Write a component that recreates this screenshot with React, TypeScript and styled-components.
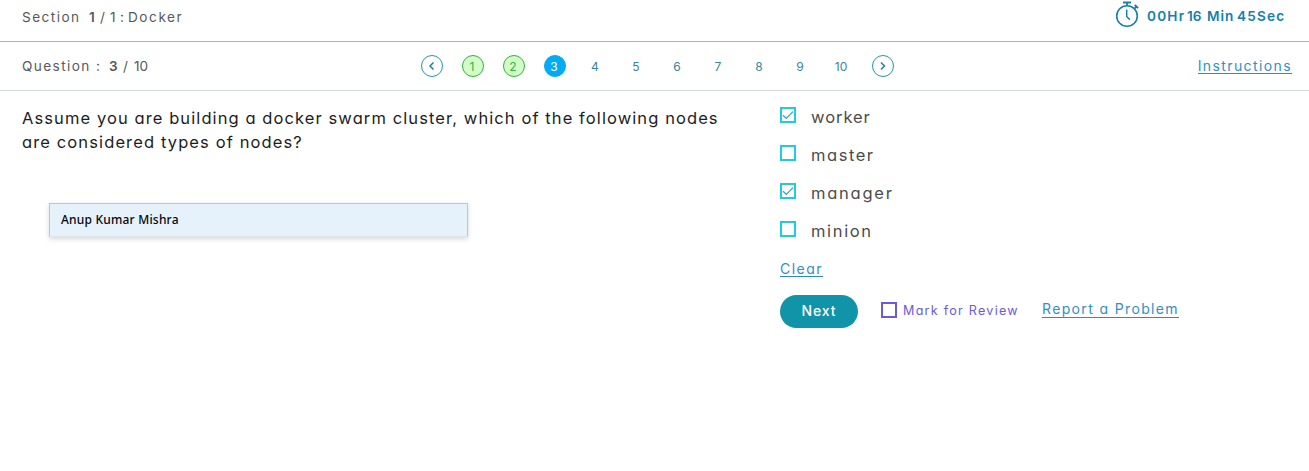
import React from "react";
import styled, { createGlobalStyle } from "styled-components";

const GlobalStyle = createGlobalStyle`
  * { box-sizing: border-box; }
  body {
    margin: 0;
    background: #fff;
    font-family: Inter, "Liberation Sans", sans-serif;
    font-feature-settings: "cv11" 1, "calt" 0;
    overflow: hidden;
  }
`;

const Page = styled.div`
  height: 471px;
  background: #fff;
  color: #58595b;
`;

const SectionBar = styled.header`
  display: flex;
  justify-content: space-between;
  height: 42px;
  padding: 0 24px 0 22px;
  border-bottom: 1px solid #74cbd8;
`;

const QuestionBar = styled.nav`
  display: grid;
  grid-template-columns: 399px 1fr auto;
  height: 49px;
  padding: 0 17px 0 22px;
  border-bottom: 1px solid #d9dcdc;
  line-height: 48px;
`;

const Label = styled.div<{ $line: number }>`
  display: flex;
  font-size: 13.6px;
  line-height: ${(p) => p.$line}px;
  white-space: pre;
`;

const Piece = styled.span<{ $w: number; $ls?: number; $bold?: boolean }>`
  width: ${(p) => p.$w}px;
  letter-spacing: ${(p) => p.$ls ?? 0}px;
  font-weight: ${(p) => (p.$bold ? 600 : 400)};
`;

const Timer = styled.div`
  display: flex;
  color: #1480ad;
  font-size: 13.6px;
  line-height: 33px;
  white-space: pre;
`;

const StopwatchIcon = styled.svg`
  width: 26px;
  height: 28px;
  margin-right: 6px;
`;

const Pager = styled.div`
  display: flex;
  gap: 19px;
  padding-top: 13px;
`;

type BubbleKind = "plain" | "done" | "current" | "arrow";

const bubbleColors: Record<BubbleKind, [string, string, string]> = {
  plain: ["transparent", "transparent", "#3b83a0"],
  done: ["#d3fdc8", "#2eb53a", "#2eb53a"],
  current: ["#03aaf4", "#03aaf4", "#ffffff"],
  arrow: ["#ffffff", "#2399a8", "#26808f"],
};

const Bubble = styled.span<{ $kind: BubbleKind }>`
  display: flex;
  align-items: center;
  justify-content: center;
  width: 22px;
  height: 22px;
  border-radius: 50%;
  border: 1px solid ${(p) => bubbleColors[p.$kind][1]};
  background: ${(p) => bubbleColors[p.$kind][0]};
  color: ${(p) => bubbleColors[p.$kind][2]};
  font-size: 12px;
  line-height: 20px;
  padding: 1px 2px 0 0;
`;

const ArrowIcon = styled.svg`
  width: 10px;
  height: 10px;
  margin-top: -1px;
`;

const TextLink = styled.a<{ $ls: number; $line?: number }>`
  align-self: flex-start;
  display: inline-block;
  height: 17px;
  line-height: ${(p) => p.$line ?? 17}px;
  border-bottom: 1px solid #2b8cc4;
  color: #2f8fc8;
  font-size: 14px;
  letter-spacing: ${(p) => p.$ls}px;
  white-space: nowrap;
`;

const InstructionsLink = styled(TextLink)`
  margin-top: 15px;
`;

const Body = styled.main`
  display: grid;
  grid-template-columns: 780px 1fr;
`;

const QuestionPane = styled.section`
  padding: 15px 0 0 22px;
`;

const QuestionText = styled.p`
  margin: 0;
  color: #1d1d1d;
  font-size: 16.5px;
  line-height: 24px;
  white-space: nowrap;
`;

const QuestionLine = styled.span<{ $ls: number }>`
  display: block;
  letter-spacing: ${(p) => p.$ls}px;
`;

const NameCard = styled.div`
  width: 419px;
  height: 34px;
  margin: 49px 0 0 27px;
  padding-left: 11px;
  border: 1px solid #bfc6cd;
  border-bottom-color: #dfe6ec;
  background: #e5f1fb;
  box-shadow: 0 2px 5px rgba(0, 0, 0, 0.16);
  color: #05070a;
  font-family: "Noto Sans", "Open Sans", sans-serif;
  font-size: 12px;
  font-weight: 500;
  line-height: 31px;
  letter-spacing: 0.2px;
`;

const AnswerPane = styled.section`
  padding-top: 16px;
`;

const Option = styled.label`
  display: flex;
  height: 38px;
`;

const Box = styled.span<{ $color: string }>`
  display: block;
  width: 16px;
  height: 16px;
  margin-right: 15px;
  border: 2px solid ${(p) => p.$color};
`;

const CheckIcon = styled.svg`
  display: block;
  width: 12px;
  height: 12px;
`;

const OptionText = styled.span<{ $ls: number }>`
  color: #4c4c4c;
  font-size: 16.5px;
  line-height: 21px;
  letter-spacing: ${(p) => p.$ls}px;
`;

const ClearRow = styled.div`
  display: flex;
  height: 36px;
  padding-top: 1px;
`;

const Actions = styled.div`
  display: flex;
  height: 33px;
`;

const NextButton = styled.button`
  width: 78px;
  height: 33px;
  margin: 0 23px 0 0;
  padding: 0 0 2px;
  border: 0;
  border-radius: 17px;
  background: #1193a8;
  color: #fff;
  font: 500 14px/31px Inter, sans-serif;
  letter-spacing: 0.9px;
`;

const Review = styled.label`
  display: flex;
  width: 138px;
  margin: 7px 23px 0 0;
  color: #6b5ae0;
  font-size: 12.6px;
  line-height: 17px;
  letter-spacing: 1.25px;
  white-space: nowrap;
`;

const ReviewBox = styled(Box)`
  flex: none;
  margin-right: 6px;
`;

const ReportLink = styled(TextLink)`
  margin-top: 6px;
`;

const options = [
  { text: "worker", checked: true, ls: 0.95 },
  { text: "master", checked: false, ls: 1.55 },
  { text: "manager", checked: true, ls: 1.75 },
  { text: "minion", checked: false, ls: 1.65 },
];

const bubbleKind = (n: number): BubbleKind => (n < 3 ? "done" : n === 3 ? "current" : "plain");

function Arrow({ d }: { d: string }) {
  return (
    <Bubble $kind="arrow">
      <ArrowIcon viewBox="0 0 10 10" fill="none" stroke="currentColor" strokeWidth="1.5">
        <path d={d} />
      </ArrowIcon>
    </Bubble>
  );
}

export default function App() {
  return (
    <Page>
      <GlobalStyle />
      <SectionBar>
        <Label $line={34}>
          <Piece $w={67} $ls={1.45}>Section</Piece>
          <Piece $w={11} $bold>1</Piece>
          <Piece $w={10}>/</Piece>
          <Piece $w={10}>1</Piece>
          <Piece $w={8}>:</Piece>
          <Piece $w={60} $ls={1.55}>Docker</Piece>
        </Label>
        <Timer>
          <StopwatchIcon viewBox="0 0 26 28" fill="none" stroke="currentColor">
            <circle cx="12" cy="16" r="10.3" strokeWidth="1.6" />
            <path d="M8 2.5h8M12 3v3" strokeWidth="1.8" />
            <path d="M19.2 8.8l2.2-2.2M19.7 4.8l3.4 3.4" strokeWidth="1.9" />
            <path d="M11.7 9.5v7l3.2 3.2" strokeWidth="1.5" />
          </StopwatchIcon>
          <Piece $w={40} $ls={1.2} $bold>00Hr</Piece>
          <Piece $w={20} $bold>16</Piece>
          <Piece $w={30} $ls={0.9} $bold>Min</Piece>
          <Piece $w={48} $ls={1.2} $bold>45Sec</Piece>
        </Timer>
      </SectionBar>
      <QuestionBar>
        <Label $line={48}>
          <Piece $w={74} $ls={1.4}>Question</Piece>
          <Piece $w={13}>:</Piece>
          <Piece $w={14} $bold>3</Piece>
          <Piece $w={11}>/</Piece>
          <Piece $w={20}>10</Piece>
        </Label>
        <Pager>
          <Arrow d="M7.5 1.5L4 5l3.5 3.5" />
          {Array.from({ length: 10 }, (_, i) => i + 1).map((n) => (
            <Bubble key={n} $kind={bubbleKind(n)}>{n}</Bubble>
          ))}
          <Arrow d="M4 1.5L7.5 5L4 8.5" />
        </Pager>
        <InstructionsLink $ls={1.4}>Instructions</InstructionsLink>
      </QuestionBar>
      <Body>
        <QuestionPane>
          <QuestionText>
            <QuestionLine $ls={1.09}>Assume you are building a docker swarm cluster, which of the following nodes</QuestionLine>
            <QuestionLine $ls={1.12}>are considered types of nodes?</QuestionLine>
          </QuestionText>
          <NameCard>Anup Kumar Mishra</NameCard>
        </QuestionPane>
        <AnswerPane>
          {options.map((o) => (
            <Option key={o.text}>
              <Box $color="#1fcbe2">
                {o.checked && (
                  <CheckIcon viewBox="0 0 12 12" fill="none" stroke="#2f9fd0" strokeWidth="1.2">
                    <path d="M1 6.2l3.3 3.2L11 2.6" />
                  </CheckIcon>
                )}
              </Box>
              <OptionText $ls={o.ls}>{o.text}</OptionText>
            </Option>
          ))}
          <ClearRow>
            <TextLink $ls={1.5}>Clear</TextLink>
          </ClearRow>
          <Actions>
            <NextButton>Next</NextButton>
            <Review>
              <ReviewBox $color="#6b5ae0" />
              Mark for Review
            </Review>
            <ReportLink $ls={1.36} $line={15}>Report a Problem</ReportLink>
          </Actions>
        </AnswerPane>
      </Body>
    </Page>
  );
}
